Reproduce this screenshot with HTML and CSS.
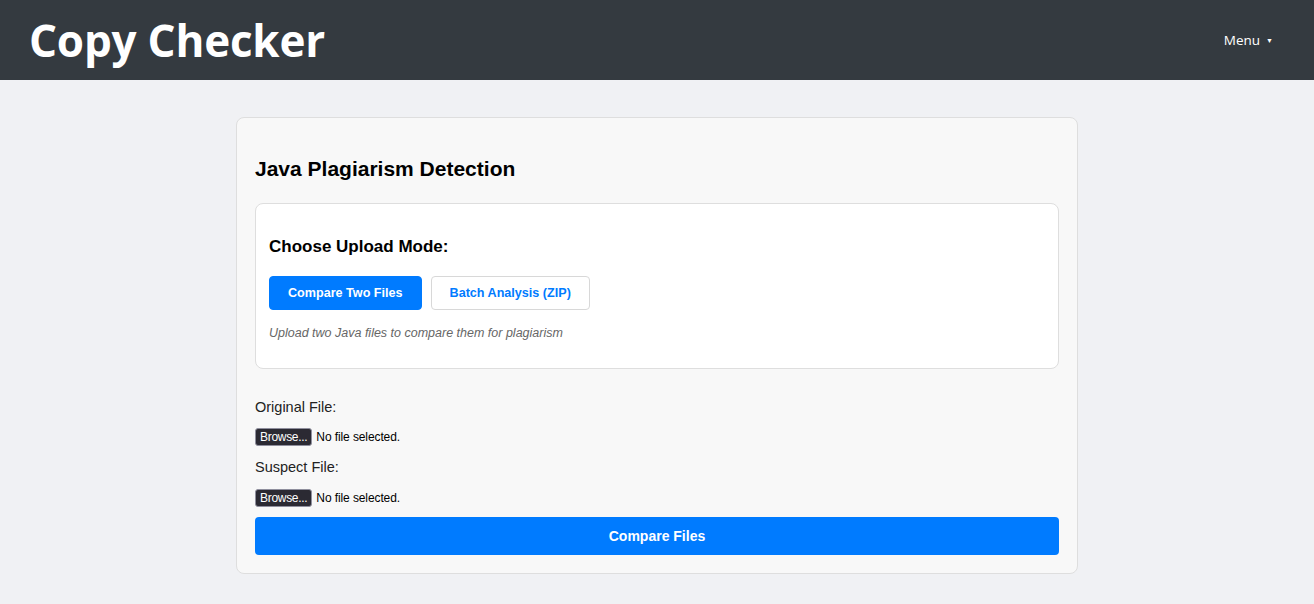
FILE: index.html
```html
<!DOCTYPE html>
<html lang="en">
<head>
<meta charset="utf-8">
<title>Copy Checker</title>
<link rel="stylesheet" href="styles.css">
</head>
<body>
<header class="topbar">
  <h1 class="brand">Copy Checker</h1>
  <div class="menu">Menu <span class="caret">&#9660;</span></div>
</header>
<main class="page">
  <section class="card">
    <h2 class="card-title">Java Plagiarism Detection</h2>
    <div class="mode-box">
      <h3 class="mode-title">Choose Upload Mode:</h3>
      <div class="mode-buttons">
        <button class="btn btn-primary" type="button">Compare Two Files</button>
        <button class="btn btn-outline" type="button">Batch Analysis (ZIP)</button>
      </div>
      <p class="mode-hint">Upload two Java files to compare them for plagiarism</p>
    </div>
    <form class="upload-form">
      <label class="field-label">Original File:</label>
      <div class="file-row"><span class="browse">Browse...</span><span class="file-name">No file selected.</span></div>
      <label class="field-label">Suspect File:</label>
      <div class="file-row last"><span class="browse">Browse...</span><span class="file-name">No file selected.</span></div>
      <button class="submit" type="button">Compare Files</button>
    </form>
  </section>
</main>
</body>
</html>
```

FILE: styles.css
```css
* { box-sizing: border-box; }
body {
  margin: 0;
  background: #f0f1f4;
  font-family: "Liberation Sans", Arial, sans-serif;
  color: #111;
}
.topbar {
  height: 80px;
  background: #343a40;
  display: flex;
  align-items: center;
  justify-content: space-between;
  padding: 0 41px 0 29px;
}
.brand {
  margin: 0;
  color: #fff;
  font-family: "Open Sans", sans-serif;
  font-weight: 700;
  font-size: 44px;
  letter-spacing: -0.2px;
  line-height: 1;
  padding-bottom: 1px;
}
.menu {
  color: #fff;
  font-family: "Open Sans", sans-serif;
  font-size: 13.5px;
  display: flex;
  align-items: center;
  gap: 6px;
}
.caret { font-size: 7px; }
.page {
  display: flex;
  justify-content: center;
  padding-top: 37px;
}
.card {
  width: 842px;
  background: #f8f8f8;
  border: 1px solid #dedede;
  border-radius: 8px;
  padding: 18px 18px 18px;
}
.card-title {
  margin: 21px 0 23px;
  font-size: 21px;
  font-weight: 700;
  line-height: 23px;
  color: #000;
}
.mode-box {
  background: #fff;
  border: 1px solid #dedede;
  border-radius: 8px;
  padding: 14px 13px 27px;
}
.mode-title {
  margin: 19px 0 19px;
  font-size: 17px;
  line-height: 20px;
  color: #000;
}
.mode-buttons { display: flex; gap: 9px; }
.btn {
  height: 34px;
  padding: 0 18px;
  font-family: "Liberation Sans", Arial, sans-serif;
  font-size: 12.6px;
  font-weight: 700;
  border-radius: 4px;
  cursor: pointer;
}
.btn-primary { background: #007bff; color: #fff; border: 1px solid #007bff; }
.btn-outline { background: #fff; color: #007bff; border: 1px solid #d8d8d8; }
.mode-hint {
  margin: 15px 0 0;
  font-size: 12.5px;
  font-style: italic;
  color: #666;
  line-height: 16px;
}
.upload-form {
  display: flex;
  flex-direction: column;
  align-items: flex-start;
  padding-top: 30px;
}
.field-label {
  font-size: 14.5px;
  line-height: 16px;
  color: #222;
}
.file-row {
  display: flex;
  align-items: center;
  gap: 4px;
  margin: 13px 0;
  height: 18px;
}
.file-row.last { margin: 14px 0 10px; }
.browse {
  background: #2b2a33;
  color: #fff;
  border: 1px solid #8f8f9d;
  border-radius: 3px;
  font-size: 12px;
  height: 18px;
  line-height: 16px;
  padding: 0 4px;
  letter-spacing: -0.3px;
}
.file-name {
  font-size: 12px;
  color: #000;
  letter-spacing: -0.1px;
}
.submit {
  width: 100%;
  height: 38px;
  background: #007bff;
  color: #fff;
  border: none;
  border-radius: 4px;
  font-family: "Liberation Sans", Arial, sans-serif;
  font-size: 14px;
  font-weight: 700;
  cursor: pointer;
}
```
